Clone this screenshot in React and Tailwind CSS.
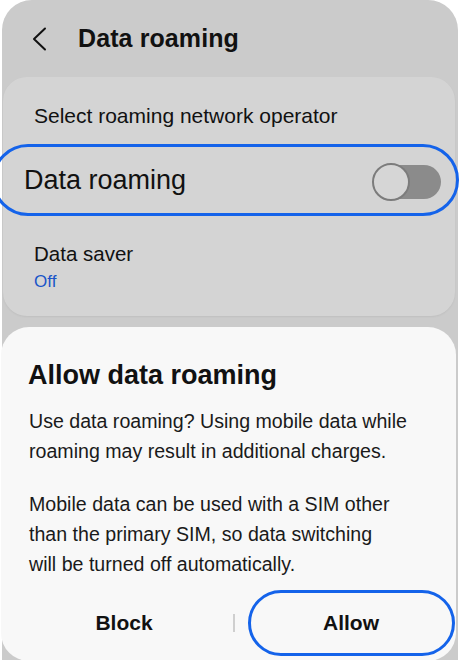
export default function App() {
  return (
    <div
      className="w-[460px] h-[660px] bg-white overflow-hidden relative"
      style={{ fontFamily: '"Liberation Sans", Arial, sans-serif' }}
    >
      {/* settings screen */}
      <div className="ml-[2px] w-[456px] h-[660px] bg-[#cbcbcb] rounded-t-[30px] flex flex-col">
        {/* header */}
        <div className="h-[77px] flex items-center shrink-0">
          <svg width="16" height="24" viewBox="0 0 16 24" className="ml-[30px]" fill="none">
            <path d="M13 1.5 L2 12 L13 22.5" stroke="#111" strokeWidth="2" strokeLinecap="round" strokeLinejoin="round" />
          </svg>
          <h1 className="ml-[30px] text-[25px] font-bold text-[#111] leading-none tracking-[0.1px]">Data roaming</h1>
        </div>

        {/* settings card */}
        <div className="ml-[1px] w-[452px] bg-[#d4d4d4] rounded-[24px] pt-[27px] pb-[23px] shadow-[0_1px_2px_rgba(0,0,0,0.06)]">
          <div className="pl-[31px] text-[21px] leading-[24px] text-[#111]">Select roaming network operator</div>

          <div className="mt-[16px] ml-[-11px] w-[467px] h-[72px] border-[3px] border-[#1463ea] rounded-full flex items-center justify-between">
            <span className="ml-[29px] text-[27px] leading-none text-[#111]">Data roaming</span>
            {/* switch, off */}
            <div className="relative w-[69px] h-[38px] mr-[15px] mt-[3px]">
              <div className="absolute right-0 top-[2px] w-[61px] h-[34px] rounded-full bg-[#8b8b8b]" />
              <div className="absolute left-0 top-0 w-[38px] h-[38px] rounded-full bg-[#d6d6d6] border-2 border-[#7c7c7c]" />
            </div>
          </div>

          <div className="mt-[26px] pl-[31px]">
            <div className="text-[20.5px] leading-[24px] text-[#111]">Data saver</div>
            <div className="mt-[5px] text-[17px] leading-[22px] text-[#1a55c8]">Off</div>
          </div>
        </div>
      </div>

      {/* confirmation sheet */}
      <div className="absolute left-[1px] top-[327px] w-[455px] h-[334px] bg-[#f8f8f8] rounded-[28px] pt-[32px]">
        <h2 className="pl-[27px] text-[27px] leading-[32px] font-bold text-[#111]">Allow data roaming</h2>
        <p className="mt-[15px] pl-[28px] text-[19.6px] leading-[30px] text-[#1a1a1a]">
          Use data roaming? Using mobile data while
          <br />
          roaming may result in additional charges.
        </p>
        <p className="mt-[23px] pl-[28px] text-[19.6px] leading-[30px] text-[#1a1a1a]">
          Mobile data can be used with a SIM other
          <br />
          than the primary SIM, so data switching
          <br />
          will be turned off automatically.
        </p>
        <div className="mt-[11px] flex items-center">
          <button className="w-[232px] h-[66px] pl-[14px] text-[21px] font-bold text-[#111]">Block</button>
          <div className="w-[1.5px] h-[18px] bg-[#cfcfcf]" />
          <button className="ml-[13px] w-[207px] h-[66px] rounded-full border-[3px] border-[#1463ea] text-[21px] font-bold text-[#111]">
            Allow
          </button>
        </div>
      </div>
    </div>
  );
}
